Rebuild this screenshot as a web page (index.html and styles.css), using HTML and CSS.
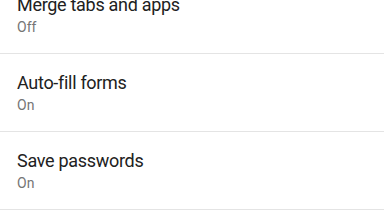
FILE: index.html
```html
<!DOCTYPE html>
<html lang="en">
<head>
  <meta charset="UTF-8" />
  <meta name="viewport" content="width=device-width, initial-scale=1.0" />
  <title>Settings</title>
  <link rel="stylesheet" href="styles.css">
</head>
<body>

<div class="settings-list">
  <div class="pref">
    <div class="pref-title">Merge tabs and apps</div>
    <div class="pref-summary">Off</div>
  </div>
  <div class="pref">
    <div class="pref-title">Auto-fill forms</div>
    <div class="pref-summary">On</div>
  </div>
  <div class="pref">
    <div class="pref-title">Save passwords</div>
    <div class="pref-summary">On</div>
  </div>
</div>

</body>
</html>
```

FILE: styles.css
```css
body {
  margin: 0;
  background: #fff;
  font-family: Roboto, "Noto Sans", sans-serif;
  overflow: hidden;
}
.settings-list {
  margin-top: -24px;
}
.pref {
  padding: 17px 16px 16px 17px;
  border-bottom: 1px solid #e4e4e4;
}
.pref-title {
  font-size: 18px;
  line-height: 24px;
  letter-spacing: -0.3px;
  color: #212121;
}
.pref-summary {
  font-size: 14px;
  line-height: 20px;
  color: #757575;
}
```
